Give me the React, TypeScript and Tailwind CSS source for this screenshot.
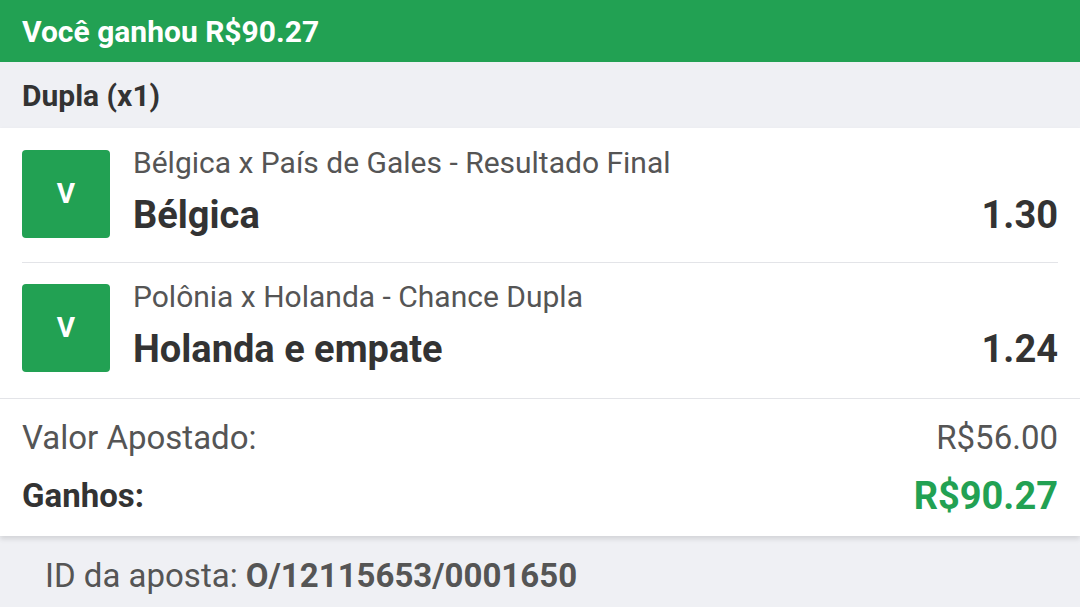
const Selection = ({ title, pick, odd, last }: { title: string; pick: string; odd: string; last?: boolean }) => (
  <div className={`mx-[22px] flex items-start gap-[23px] ${last ? "pt-[21px] pb-[26px]" : "pt-[22px] pb-[24px] border-b border-[#e3e4e8]"}`}>
    <div className="w-[88px] h-[88px] shrink-0 rounded-[4px] bg-[#22a153] flex items-center justify-center text-white font-bold text-[28px]">
      V
    </div>
    <div className="flex-1 flex flex-col">
      <div className="text-[30px] leading-[30px] text-[#555] -mt-[2px]">{title}</div>
      <div className="mt-[16px] flex justify-between items-center text-[38px] leading-[42px] font-bold text-[#333]">
        <span>{pick}</span>
        <span>{odd}</span>
      </div>
    </div>
  </div>
);

export default function App() {
  return (
    <div className="w-[1080px] h-[607px] overflow-hidden bg-[#eff0f4] font-['Roboto',sans-serif]">
      <div className="h-[62px] bg-[#22a153] px-[22px] flex items-center text-white font-bold text-[30px]">
        Você ganhou R$90.27
      </div>
      <div className="h-[66px] px-[22px] flex items-center text-[30px] font-bold text-[#333]">Dupla (x1)</div>
      <div className="bg-white shadow-[0_3px_5px_rgba(0,0,0,0.12)]">
        <Selection title="Bélgica x País de Gales - Resultado Final" pick="Bélgica" odd="1.30" />
        <Selection title="Polônia x Holanda - Chance Dupla" pick="Holanda e empate" odd="1.24" last />
        <div className="border-t border-[#e3e4e8] px-[22px] pt-[21px] pb-[20px]">
          <div className="flex justify-between items-center text-[33px] leading-[36px] text-[#555]">
            <span>Valor Apostado:</span>
            <span>R$56.00</span>
          </div>
          <div className="mt-[20px] flex justify-between items-center leading-[40px] font-bold">
            <span className="text-[33px] text-[#333]">Ganhos:</span>
            <span className="text-[38px] text-[#22a153]">R$90.27</span>
          </div>
        </div>
      </div>
      <div className="px-[45px] pt-[8px] h-[72px] flex items-center text-[33px] text-[#555]">
        <span>
          ID da aposta: <span className="font-bold">O/12115653/0001650</span>
        </span>
      </div>
    </div>
  );
}
